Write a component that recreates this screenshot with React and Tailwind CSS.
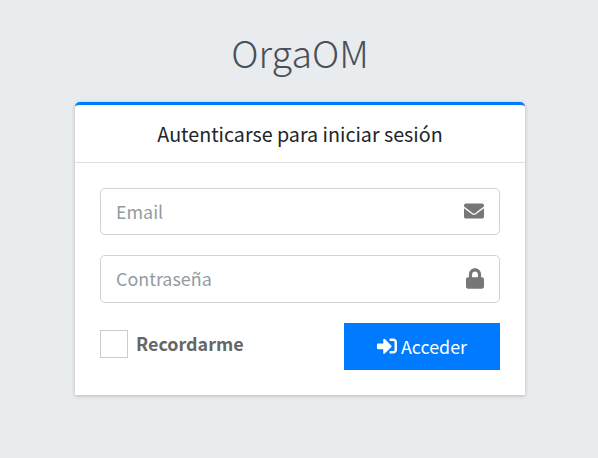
import { FaEnvelope, FaLock, FaSignInAlt } from "react-icons/fa";

function Field({ type, placeholder, className, children }) {
  return (
    <div className={`flex items-center rounded-[5px] border border-[#ced4da] pr-[15px] ${className}`}>
      <input
        type={type}
        placeholder={placeholder}
        className="h-full min-w-0 flex-1 bg-transparent pb-[2px] pl-[15px] text-[17.9px] text-[#495057] outline-none placeholder:text-[#939ba2]"
      />
      <span className="pb-px text-[#777777]">{children}</span>
    </div>
  );
}

export default function App() {
  return (
    <div className="flex h-[458px] w-[598px] flex-col items-center bg-[#e9ecef] pl-[2px] font-['Noto_Sans_CJK_JP','Noto_Sans_CJK_SC',sans-serif] text-[17.9px] text-[#212529]">
      <h1 className="mt-[22px] h-[60px] text-[37.6px] leading-[60px] font-light whitespace-nowrap text-[#495057]">
        OrgaOM
      </h1>
      <div className="mt-[19.5px] flex h-[293.5px] w-[450px] flex-col rounded-t-[5px] border-t-[3px] border-[#007bff] bg-white shadow-[0_1px_4px_rgba(0,0,0,0.2),0_0_1px_rgba(0,0,0,0.13)]">
        <h3 className="h-[58.5px] border-b border-[#dfdfdf] text-center text-[19.7px] leading-[58.5px] whitespace-nowrap">
          Autenticarse para iniciar sesión
        </h3>
        <form className="flex flex-col px-[25px] pt-[25px]">
          <Field type="email" placeholder="Email" className="h-[47px]">
            <FaEnvelope className="size-5" />
          </Field>
          <Field type="password" placeholder="Contraseña" className="mt-5 h-[48px]">
            <FaLock className="h-[21px] w-[18px]" />
          </Field>
          <div className="mt-5 flex items-start justify-between">
            <label className="mt-[7px] flex h-7 items-center">
              <span className="size-7 border border-[#cdcdc5] bg-white" />
              <span className="ml-[8px] pb-[2px] text-[17.9px] leading-7 font-bold text-[#666666]">Recordarme</span>
            </label>
            <button type="button" className="flex h-[47px] w-[156px] items-center justify-center gap-1 bg-[#007bff] text-white">
              <FaSignInAlt className="mb-px size-5" />
              <span>Acceder</span>
            </button>
          </div>
        </form>
      </div>
    </div>
  );
}
